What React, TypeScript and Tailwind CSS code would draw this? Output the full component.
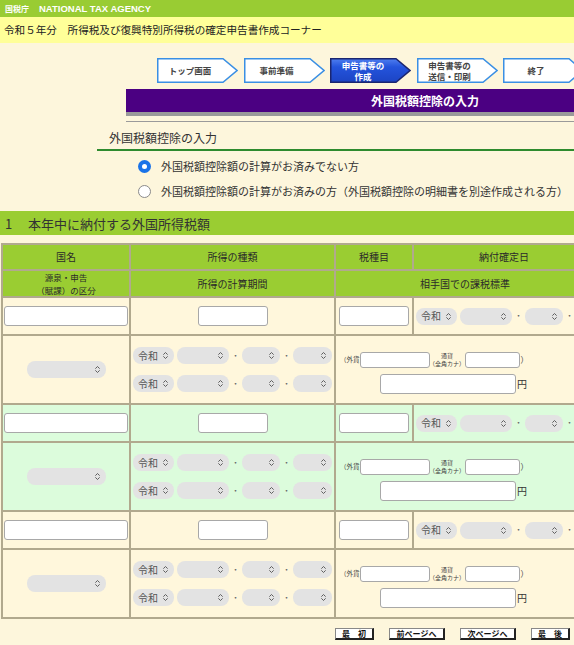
import { ChevronsUpDown } from 'lucide-react';

const steps = [
  { lines: ['トップ画面'], active: false },
  { lines: ['事前準備'], active: false },
  { lines: ['申告書等の', '作成'], active: true },
  { lines: ['申告書等の', '送信・印刷'], active: false },
  { lines: ['終了'], active: false },
];

function Step({ lines, active }: { lines: string[]; active: boolean }) {
  return (
    <div className="relative w-[81px] h-[25px] shrink-0">
      <svg className="absolute inset-0" width="81" height="25" viewBox="0 0 81 25">
        <defs>
          <linearGradient id="stepActive" x1="0" y1="0" x2="0" y2="1">
            <stop offset="0" stopColor="#4f7ef0" />
            <stop offset="0.35" stopColor="#2454dc" />
            <stop offset="1" stopColor="#1c44c4" />
          </linearGradient>
        </defs>
        <polygon
          points="0.75,0.75 66,0.75 80,12.5 66,24.25 0.75,24.25"
          fill={active ? 'url(#stepActive)' : '#ffffff'}
          stroke={active ? '#1b2670' : '#3a8fe4'}
          strokeWidth="1.5"
        />
      </svg>
      <div
        className={
          active
            ? 'relative w-[66px] h-full flex flex-col items-center justify-center text-[8.5px] leading-[11px] font-bold text-white'
            : 'relative w-[66px] h-full flex flex-col items-center justify-center text-[8.5px] leading-[11px] font-bold text-[#444]'
        }
      >
        {lines.map((l) => (
          <span key={l} className="whitespace-nowrap">{l}</span>
        ))}
      </div>
    </div>
  );
}

function Sel({ w, label }: { w: string; label?: string }) {
  return (
    <div className={`${w} h-[17px] shrink-0 rounded-[8px] bg-[#e3e3e3] flex items-center justify-between pl-[5px] pr-[4px] text-[10px] leading-none text-[#555]`}>
      <span className="whitespace-nowrap">{label}</span>
      <ChevronsUpDown size={9} strokeWidth={2.5} className="text-[#555]" />
    </div>
  );
}

function Input({ w, h = 'h-[20px]' }: { w: string; h?: string }) {
  return <div className={`${w} ${h} shrink-0 bg-white border border-[#a8a8a8] rounded-[3px]`} />;
}

function Dot() {
  return <span className="w-[13px] shrink-0 text-center text-[8px] leading-none text-[#666]">・</span>;
}

function DateSels() {
  return (
    <div className="flex items-center">
      <Sel w="w-[41px]" label="令和" />
      <div className="w-[3px] shrink-0" />
      <Sel w="w-[52px]" />
      <Dot />
      <Sel w="w-[38px]" />
      <Dot />
      <Sel w="w-[39px]" />
    </div>
  );
}

function DataRows({ bg }: { bg: string }) {
  return (
    <>
      <tr className="h-[36px]">
        <td className={`${bg} px-[1px]`}>
          <Input w="w-[124px]" />
        </td>
        <td className={bg}>
          <div className="flex justify-center">
            <Input w="w-[70px]" />
          </div>
        </td>
        <td className={`${bg} px-[3px]`}>
          <Input w="w-[70px]" />
        </td>
        <td className={`${bg} pl-[2px]`}>
          <DateSels />
        </td>
      </tr>
      <tr className="h-[67px]">
        <td className={bg}>
          <div className="flex justify-center">
            <Sel w="w-[79px]" />
          </div>
        </td>
        <td className={`${bg} pl-[2px]`}>
          <div className="flex flex-col gap-[11px]">
            <DateSels />
            <DateSels />
          </div>
        </td>
        <td colSpan={2} className={`${bg} pl-[4px] pt-[6px]`}>
          <div className="flex flex-col gap-[6px]">
            <div className="flex items-center">
              <span className="shrink-0 whitespace-nowrap text-[6.5px] leading-none text-[#444]">（外貨</span>
              <Input w="w-[70px]" h="h-[16px]" />
              <div className="w-[35px] shrink-0 flex flex-col items-center whitespace-nowrap text-[6px] leading-[8px] text-[#444]">
                <span>通貨</span>
                <span>（全角カナ）</span>
              </div>
              <Input w="w-[55px]" h="h-[16px]" />
              <span className="text-[8px] leading-none text-[#444] pl-[1px]">）</span>
            </div>
            <div className="flex items-center pl-[40px]">
              <Input w="w-[136px]" />
              <span className="text-[10px] leading-none text-[#333] pl-[1px]">円</span>
            </div>
          </div>
        </td>
      </tr>
    </>
  );
}

function NavButton({ label, w }: { label: string; w: string }) {
  return (
    <div className={`${w} h-[12px] bg-white border-l border-t border-[#888] border-r-2 border-b-2 border-r-[#222] border-b-[#222] flex items-center justify-center whitespace-nowrap text-[8px] leading-none font-bold text-[#111]`}>
      {label}
    </div>
  );
}

export default function App() {
  const th = 'bg-[#9acd32] text-center text-[10px] leading-[12px] text-[#2a2a2a]';
  return (
    <div className="w-full h-[645px] overflow-hidden bg-[#fdf6dc] font-['Noto_Sans_CJK_JP','Noto_Sans',sans-serif]">
      <div className="w-[724px]">
        <div className="h-[17px] bg-[#99cc33] flex items-center pl-[5px] text-white font-bold">
          <span className="text-[8px] leading-none">国税庁</span>
          <span className="ml-[10px] text-[9.5px] leading-none font-['Liberation_Sans',sans-serif]">NATIONAL TAX AGENCY</span>
        </div>
        <div className="h-[26px] bg-[#ffff99] flex items-center pl-[4px] text-[10.6px] leading-none text-[#222]">
          令和５年分　所得税及び復興特別所得税の確定申告書作成コーナー
        </div>

        <div className="flex gap-[5.5px] pl-[157px] pt-[15px]">
          {steps.map((s) => (
            <Step key={s.lines.join('')} lines={s.lines} active={s.active} />
          ))}
        </div>

        <div className="ml-[126px] mt-[6px] h-[27px] bg-[#4b0082] border-b-[4px] border-[#9a9a9a] flex items-center justify-center text-white font-bold text-[12px] leading-none">
          外国税額控除の入力
        </div>
        <div className="ml-[126px] mt-[5px] h-px bg-[#9a9a9a]" />

        <div className="ml-[97px] pl-[12px] pt-[8px] pb-[3px] border-b-2 border-[#2e8b2e] text-[12px] leading-[16px] text-[#333]">
          外国税額控除の入力
        </div>

        <div className="pl-[138px] pt-[3px]">
          <div className="h-[25px] flex items-center gap-[10px] text-[11px] text-[#333] whitespace-nowrap">
            <span className="w-[13px] h-[13px] rounded-full bg-[#1a73e8] flex items-center justify-center">
              <span className="w-[5px] h-[5px] rounded-full bg-white" />
            </span>
            外国税額控除額の計算がお済みでない方
          </div>
          <div className="h-[25px] flex items-center gap-[10px] text-[11px] text-[#333] whitespace-nowrap">
            <span className="w-[13px] h-[13px] rounded-full bg-white border border-[#8a8a8a]" />
            外国税額控除額の計算がお済みの方（外国税額控除の明細書を別途作成される方）
          </div>
        </div>

        <div className="mt-[7px] h-[24px] bg-[#9acd32] flex items-center pl-[5px] text-[13px] leading-none text-[#333]">
          <span className="w-[23px]">1</span>
          本年中に納付する外国所得税額
        </div>

        <table className="mt-[8px] ml-[1px] table-fixed border-separate border-spacing-[2px] bg-[#b1a98e] w-[595px]">
          <colgroup>
            <col className="w-[126px]" />
            <col className="w-[203px]" />
            <col className="w-[76px]" />
            <col className="w-[180px]" />
          </colgroup>
          <tbody>
            <tr className="h-[24px]">
              <td className={th}>国名</td>
              <td className={th}>所得の種類</td>
              <td className={th}>税種目</td>
              <td className={th}>納付確定日</td>
            </tr>
            <tr className="h-[25px]">
              <td className="bg-[#9acd32] text-center text-[8.5px] leading-[12.5px] text-[#2a2a2a]">
                <div>源泉・申告</div>
                <div>（賦課）の区分</div>
              </td>
              <td className={th}>所得の計算期間</td>
              <td colSpan={2} className={th}>
                相手国での課税標準
              </td>
            </tr>
            <DataRows bg="bg-[#fff7dc]" />
            <DataRows bg="bg-[#dcfcdc]" />
            <DataRows bg="bg-[#fff7dc]" />
          </tbody>
        </table>

        <div className="flex pl-[335px] pt-[9px] gap-[15px]">
          <NavButton label="最　初" w="w-[39px]" />
          <NavButton label="前ページへ" w="w-[56px]" />
          <NavButton label="次ページへ" w="w-[56px]" />
          <NavButton label="最　後" w="w-[39px]" />
        </div>
      </div>
    </div>
  );
}
